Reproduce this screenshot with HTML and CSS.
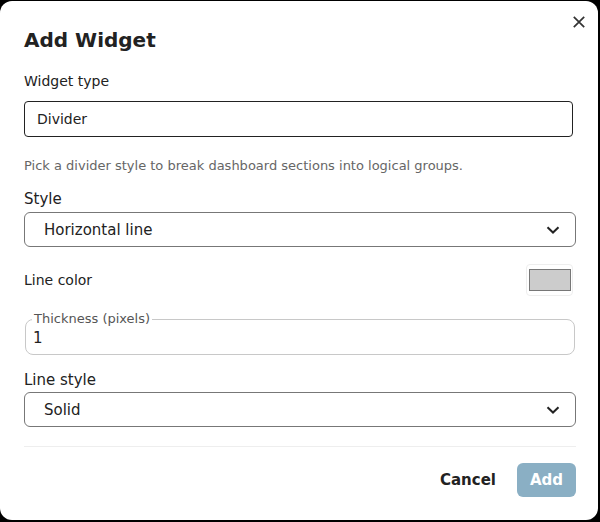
FILE: index.html
```html
<!DOCTYPE html>
<html>
<head>
<meta charset="utf-8">
<link rel="stylesheet" href="styles.css">
</head>
<body>
<div class="dialog">
  <button class="close" aria-label="Close">
    <svg width="12" height="12" viewBox="0 0 12 12"><path d="M0.8 0.8 L11.2 11.2 M11.2 0.8 L0.8 11.2" stroke="#333" stroke-width="1.7" fill="none"/></svg>
  </button>
  <h2 class="title">Add Widget</h2>
  <div class="label sm">Widget type</div>
  <div class="input">Divider</div>
  <p class="help">Pick a divider style to break dashboard sections into logical groups.</p>
  <div class="label lg">Style</div>
  <div class="select"><span>Horizontal line</span>
    <svg class="chev" width="14" height="8" viewBox="0 0 14 8"><path d="M1.5 1.2 L7 6.5 L12.5 1.2" stroke="#222" stroke-width="2" fill="none"/></svg>
  </div>
  <div class="color-row">
    <span class="label sm">Line color</span>
    <span class="swatch-box"><span class="swatch"></span></span>
  </div>
  <fieldset class="outlined">
    <legend>Thickness (pixels)</legend>
    <div class="value">1</div>
  </fieldset>
  <div class="label lg ls">Line style</div>
  <div class="select second"><span>Solid</span>
    <svg class="chev" width="14" height="8" viewBox="0 0 14 8"><path d="M1.5 1.2 L7 6.5 L12.5 1.2" stroke="#222" stroke-width="2" fill="none"/></svg>
  </div>
  <div class="footer">
    <button class="btn cancel">Cancel</button>
    <button class="btn add">Add</button>
  </div>
</div>
</body>
</html>
```
FILE: styles.css
```css
* { box-sizing: border-box; }
body {
  margin: 0;
  background: #000;
  font-family: "DejaVu Sans", Verdana, sans-serif;
  color: #222;
}
.dialog {
  position: relative;
  margin-top: 1px;
  width: 598px;
  height: 519px;
  background: #fff;
  border-radius: 12px;
  padding: 25px 24px 0 24px;
}
.close {
  position: absolute;
  top: 14px;
  right: 12px;
  width: 14px;
  height: 14px;
  padding: 0;
  border: 0;
  background: none;
  display: flex;
  align-items: center;
  justify-content: center;
}
.title {
  margin: 0;
  font-size: 20px;
  line-height: 28px;
  font-weight: bold;
  color: #222;
}
.label { display: block; color: #222; }
.label.sm { font-size: 14px; line-height: 20px; margin-top: 17px; }
.label.lg { font-size: 15px; line-height: 20px; margin-top: 14px; }
.input {
  margin-top: 10px;
  width: 549px;
  height: 36px;
  border: 1px solid #222;
  border-radius: 4px;
  font-size: 14px;
  line-height: 34px;
  padding-left: 12px;
  color: #222;
}
.help {
  margin: 20px 0 0 0;
  font-size: 13px;
  line-height: 18px;
  color: #666;
}
.select {
  margin-top: 3px;
  width: 552px;
  height: 35px;
  border: 1px solid #777;
  border-radius: 6px;
  display: flex;
  align-items: center;
  justify-content: space-between;
  padding: 0 15px 0 19px;
  font-size: 15px;
  color: #222;
}
.select.second { margin-top: 2px; }
.chev { display: block; }
.color-row {
  margin-top: 17px;
  width: 549px;
  height: 32px;
  display: flex;
  align-items: center;
  justify-content: space-between;
}
.color-row .label { margin-top: 0; }
.swatch-box {
  width: 47px;
  height: 32px;
  border: 1px solid #eee;
  border-radius: 4px;
  display: flex;
  align-items: center;
  justify-content: center;
}
.swatch {
  width: 42px;
  height: 22px;
  background: #ccc;
  border: 1px solid #777;
}
.outlined {
  margin: 16px 0 0 1px;
  width: 550px;
  height: 43px;
  border: 1px solid #c8c8c8;
  border-radius: 8px;
  padding: 0 7px;
  min-width: 0;
}
.outlined legend {
  font-size: 13px;
  line-height: 14px;
  color: #555;
  padding: 0 2px;
  margin-left: -1px;
}
.value {
  font-size: 15px;
  line-height: 20px;
  padding-top: 2px;
  color: #222;
}
.label.ls { margin-top: 15px; }
.footer {
  margin-top: 19px;
  width: 552px;
  border-top: 1px solid #eee;
  padding-top: 16px;
  display: flex;
  justify-content: flex-end;
  align-items: center;
  gap: 13px;
}
.btn {
  font-family: "DejaVu Sans", Verdana, sans-serif;
  font-size: 15px;
  font-weight: bold;
  border: 0;
  height: 34px;
  border-radius: 6px;
  padding: 0 8px;
}
.cancel { background: none; color: #222; }
.add { background: #8aafc4; color: #fff; width: 59px; padding: 0; }
```
